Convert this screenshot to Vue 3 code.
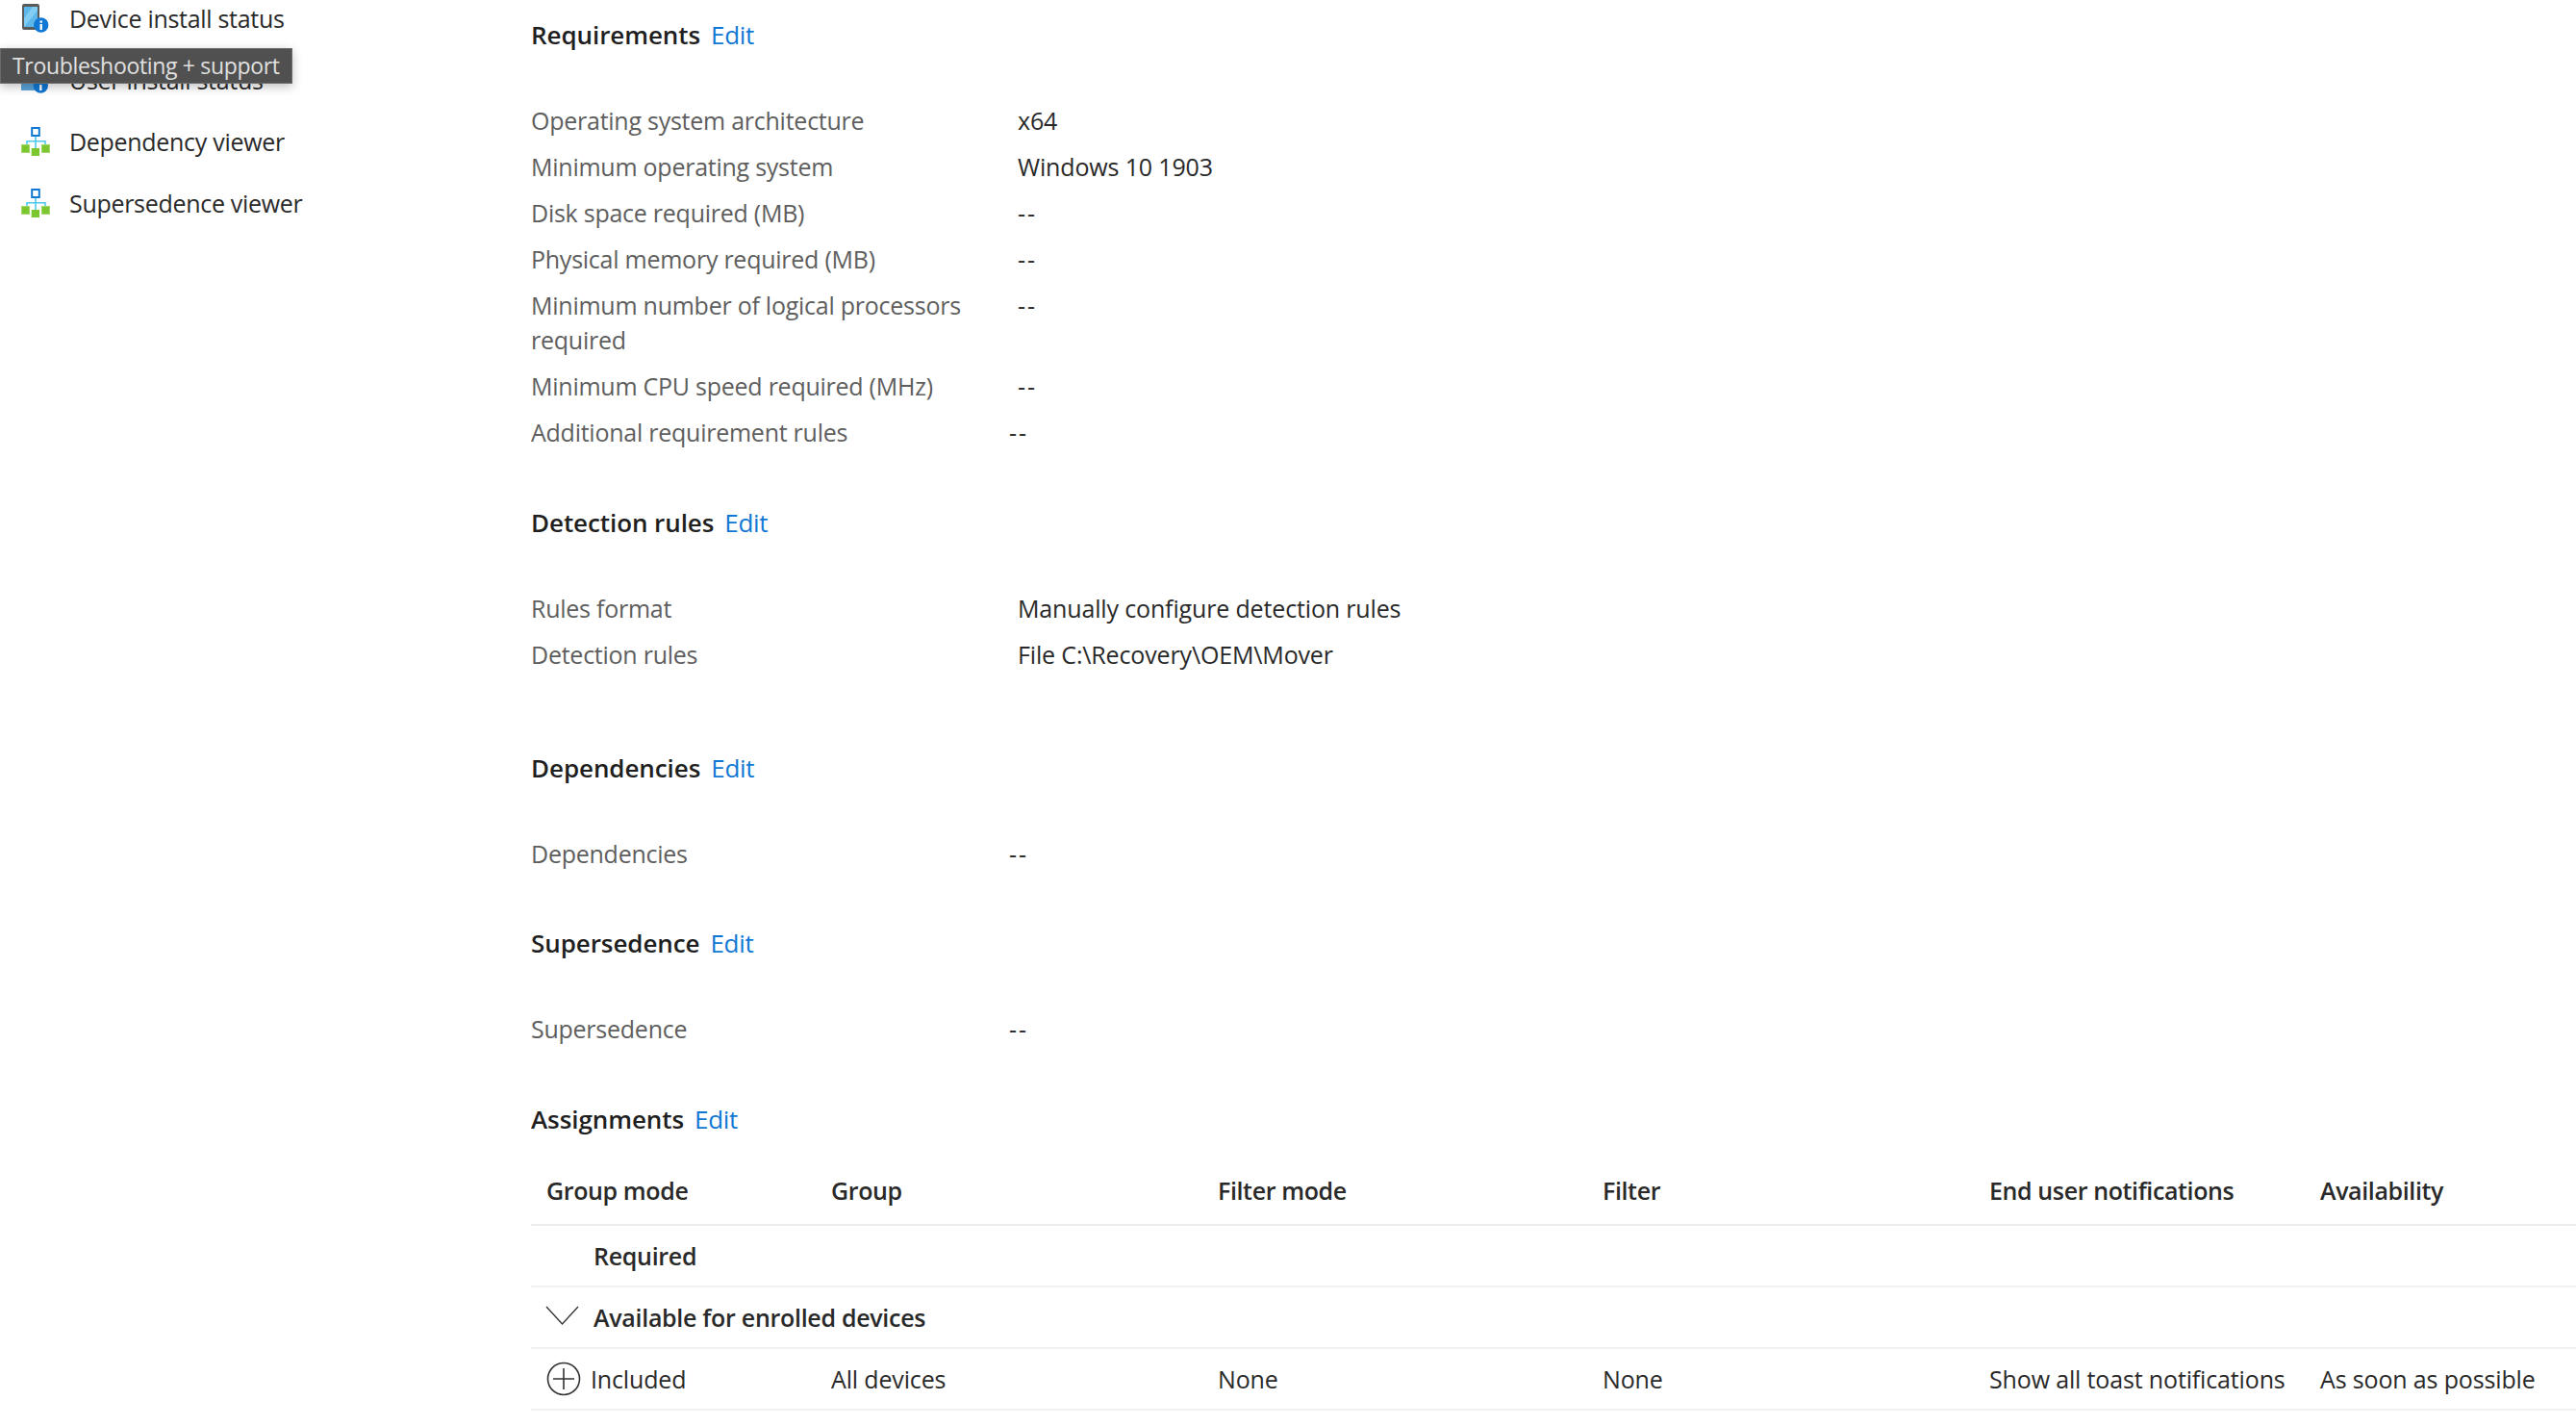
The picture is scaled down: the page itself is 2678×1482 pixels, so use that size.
<script setup>
const navItems = [
  { label: 'Device install status', icon: 'device' },
  { label: 'User install status', icon: 'user' },
  { label: 'Dependency viewer', icon: 'tree' },
  { label: 'Supersedence viewer', icon: 'tree' },
];

const sections = [
  {
    title: 'Requirements',
    cls: 'sec-req',
    rows: [
      { label: 'Operating system architecture', value: 'x64' },
      { label: 'Minimum operating system', value: 'Windows 10 1903' },
      { label: 'Disk space required (MB)', value: '--' },
      { label: 'Physical memory required (MB)', value: '--' },
      { label: 'Minimum number of logical processors required', value: '--' },
      { label: 'Minimum CPU speed required (MHz)', value: '--' },
      { label: 'Additional requirement rules', value: '--', tight: true },
    ],
  },
  {
    title: 'Detection rules',
    cls: 'sec-det',
    rows: [
      { label: 'Rules format', value: 'Manually configure detection rules' },
      { label: 'Detection rules', value: 'File C:\\Recovery\\OEM\\Mover' },
    ],
  },
  {
    title: 'Dependencies',
    cls: 'sec-dep',
    rows: [{ label: 'Dependencies', value: '--', tight: true }],
  },
  {
    title: 'Supersedence',
    cls: 'sec-sup',
    rows: [{ label: 'Supersedence', value: '--', tight: true }],
  },
];

const columns = ['Group mode', 'Group', 'Filter mode', 'Filter', 'End user notifications', 'Availability'];
</script>

<template>
  <div class="page">
    <aside class="sidebar">
      <div v-for="item in navItems" :key="item.label" class="nav-item">
        <svg class="nav-icon" viewBox="0 0 32 32" width="32" height="32">
          <template v-if="item.icon === 'device'">
            <rect x="2" y="0" width="18" height="27" rx="2" fill="#5a5a5a" />
            <rect x="4" y="3" width="14" height="21" fill="#5db7e8" />
            <path d="M4 24 L18 7 V3 H13 L4 15 Z" fill="#83cdf2" />
            <circle cx="21.7" cy="22" r="7.7" fill="#0f78d4" />
            <rect x="20.5" y="21" width="2.4" height="6" fill="#fff" />
            <rect x="20.5" y="17.5" width="2.4" height="2.2" fill="#fff" />
          </template>
          <template v-else-if="item.icon === 'user'">
            <rect x="1" y="16" width="20" height="10" fill="#5ba3d9" />
            <circle cx="21.3" cy="21" r="7.7" fill="#0f78d4" />
            <rect x="20.1" y="20" width="2.4" height="6" fill="#fff" />
            <rect x="20.1" y="16.5" width="2.4" height="2.2" fill="#fff" />
          </template>
          <template v-else>
            <path d="M16 10 V23 M7 19 V14.7 H26 V19" fill="none" stroke="#50c8ef" stroke-width="1.6" />
            <rect x="12.2" y="1" width="7.6" height="8" fill="#fff" stroke="#0f78d4" stroke-width="2" />
            <rect x="1.5" y="18.5" width="8" height="8" fill="#7cc62f" stroke="#a5d86b" stroke-width="1" />
            <rect x="11.7" y="22" width="8.3" height="8" fill="#7cc62f" />
            <rect x="22.5" y="18.5" width="8" height="8" fill="#7cc62f" stroke="#a5d86b" stroke-width="1" />
          </template>
        </svg>
        <span class="nav-label">{{ item.label }}</span>
      </div>
      <div class="tooltip">Troubleshooting + support</div>
    </aside>

    <main class="main">
      <section v-for="section in sections" :key="section.title" class="section" :class="section.cls">
        <h2 class="heading">{{ section.title }} <a class="edit">Edit</a></h2>
        <div class="rows">
          <div v-for="row in section.rows" :key="row.label" class="row" :class="{ tight: row.tight }">
            <div class="label">{{ row.label }}</div>
            <div class="value" :class="{ dash: row.value === '--' }">{{ row.value }}</div>
          </div>
        </div>
      </section>

      <section class="section sec-assign">
        <h2 class="heading">Assignments <a class="edit">Edit</a></h2>
        <div class="table">
          <div class="tr th">
            <div v-for="col in columns" :key="col" class="td">{{ col }}</div>
          </div>
          <div class="tr group">
            <div class="group-name">Required</div>
          </div>
          <div class="tr group">
            <svg class="chevron" viewBox="0 0 35 20" width="35" height="20">
              <path d="M1 1 L17.5 19 L34 1" fill="none" stroke="#333" stroke-width="1.3" />
            </svg>
            <div class="group-name">Available for enrolled devices</div>
          </div>
          <div class="tr body">
            <div class="td included">
              <svg class="plus" viewBox="0 0 36 36" width="36" height="36">
                <circle cx="18" cy="18" r="16.5" fill="none" stroke="#333" stroke-width="1.6" />
                <path d="M18 7 V29 M7 18 H29" stroke="#333" stroke-width="1.6" />
              </svg>
              <span>Included</span>
            </div>
            <div class="td">All devices</div>
            <div class="td">None</div>
            <div class="td">None</div>
            <div class="td">Show all toast notifications</div>
            <div class="td">As soon as possible</div>
          </div>
        </div>
      </section>
    </main>
  </div>
</template>

<style>
html,
body {
  margin: 0;
  background: #fff;
  overflow: hidden;
}
</style>

<style scoped>
.page {
  display: flex;
  width: 2678px;
  height: 1482px;
  overflow: hidden;
  font-family: "Open Sans", "Noto Sans", sans-serif;
  font-size: 25px;
  letter-spacing: -0.15px;
  color: #292929;
}
.sidebar {
  position: relative;
  flex: none;
  width: 552px;
}
.nav-item {
  display: flex;
  align-items: center;
  gap: 19px;
  height: 64px;
  padding-left: 21px;
  letter-spacing: -0.3px;
}
.nav-item:first-child {
  margin-top: -12px;
}
.nav-label {
  position: relative;
  top: -1px;
}
.nav-icon {
  flex: none;
}
.tooltip {
  position: absolute;
  left: 0;
  top: 50px;
  width: 304px;
  height: 37px;
  box-sizing: border-box;
  padding-left: 12px;
  line-height: 35px;
  font-size: 23px;
  letter-spacing: -0.33px;
  color: #e0e0e0;
  background: #505050;
  border: 1px solid #6b6b6b;
  box-shadow: 0 3px 10px rgba(0, 0, 0, 0.25);
}
.main {
  flex: 1;
  min-width: 0;
  padding-top: 14px;
}
.heading {
  display: flex;
  gap: 11px;
  margin: 0;
  height: 44px;
  line-height: 44px;
  font-size: 26px;
  font-weight: 600;
  letter-spacing: -0.08px;
  color: #1f1f1f;
}
.edit {
  font-weight: 400;
  font-size: 26px;
  letter-spacing: -0.3px;
  color: #0f78d4;
}
.rows {
  padding-top: 43px;
}
.row {
  display: flex;
  padding: 6px 0;
  line-height: 36px;
}
.label {
  flex: none;
  width: 506px;
  padding-right: 30px;
  box-sizing: border-box;
  letter-spacing: -0.25px;
  color: #5e5e5e;
}
.row.tight .label {
  width: 497px;
}
.value {
  color: #292929;
}
.value.dash {
  letter-spacing: 2px;
}
.sec-det {
  margin-top: 48px;
}
.sec-dep {
  margin-top: 72px;
}
.sec-sup {
  margin-top: 47px;
}
.sec-assign {
  margin-top: 48px;
}
.table {
  margin-top: 17px;
}
.tr {
  display: grid;
  grid-template-columns: 296px 402px 400px 402px 344px 1fr;
  align-items: center;
  box-sizing: border-box;
  height: 64px;
  padding-left: 16px;
  border-bottom: 2px solid #f1f1f1;
}
.th {
  height: 72px;
  font-weight: 600;
  letter-spacing: -0.38px;
  border-bottom-color: #ececec;
}
.group {
  display: flex;
  font-weight: 600;
  letter-spacing: -0.29px;
}
.group-name {
  margin-left: 49px;
}
.chevron {
  flex: none;
  margin-left: -1px;
  margin-top: -5px;
}
.chevron + .group-name {
  margin-left: 15px;
}
.included {
  display: flex;
  align-items: center;
  gap: 10px;
}
.plus {
  flex: none;
}
</style>
